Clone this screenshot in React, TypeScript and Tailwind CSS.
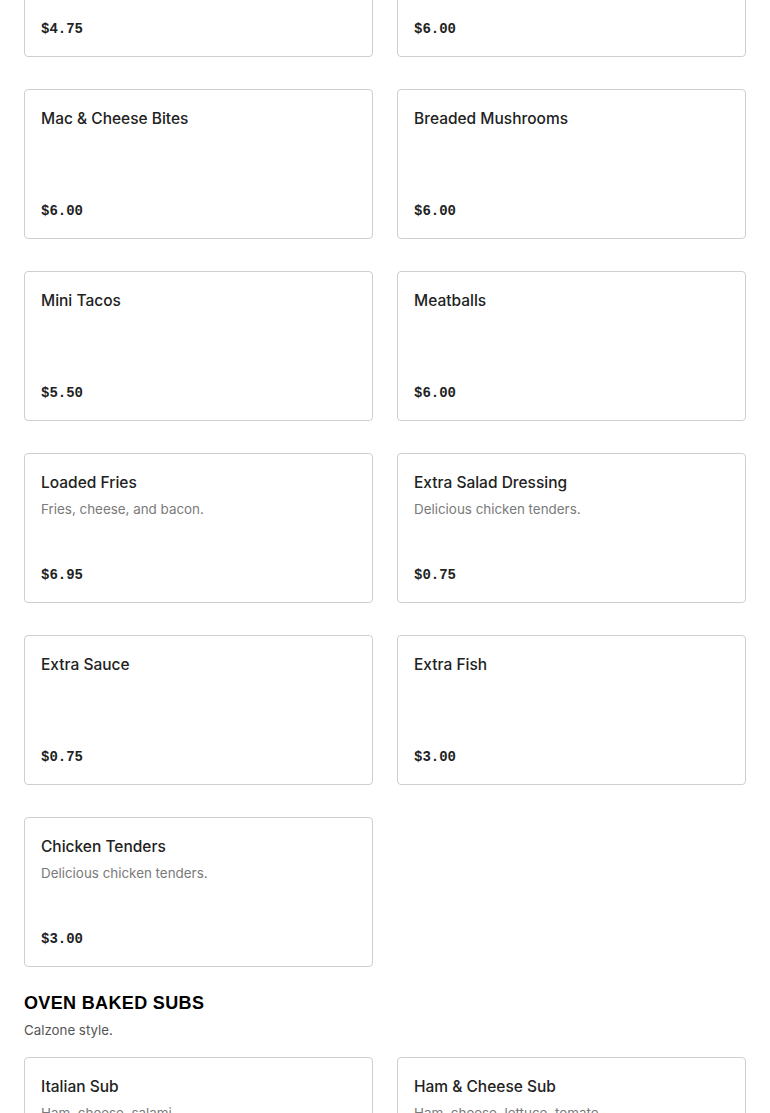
import React from 'react';

type Item = { name: string; description?: string; price: string };

const sides: Item[] = [
  { name: 'Onion Rings', price: '$4.75' },
  { name: 'Mozzarella Sticks', price: '$6.00' },
  { name: 'Mac & Cheese Bites', price: '$6.00' },
  { name: 'Breaded Mushrooms', price: '$6.00' },
  { name: 'Mini Tacos', price: '$5.50' },
  { name: 'Meatballs', price: '$6.00' },
  { name: 'Loaded Fries', description: 'Fries, cheese, and bacon.', price: '$6.95' },
  { name: 'Extra Salad Dressing', description: 'Delicious chicken tenders.', price: '$0.75' },
  { name: 'Extra Sauce', price: '$0.75' },
  { name: 'Extra Fish', price: '$3.00' },
  { name: 'Chicken Tenders', description: 'Delicious chicken tenders.', price: '$3.00' },
];

const subs: Item[] = [
  { name: 'Italian Sub', description: 'Ham, cheese, salami.', price: '$9.50' },
  { name: 'Ham & Cheese Sub', description: 'Ham, cheese, lettuce, tomato.', price: '$8.50' },
];

const sans = "font-['Inter','Liberation_Sans',sans-serif]";

// Tarjeta de un producto del menú
const MenuCard: React.FC<{ item: Item }> = ({ item }) => (
  <div className="flex h-[150px] flex-col justify-between rounded border border-[#cfcfcf] bg-white px-4 pt-[17px] pb-[17px]">
    <div>
      <div className={`${sans} text-[15.5px] leading-6 font-medium text-[#222]`}>{item.name}</div>
      {item.description && (
        <div className={`${sans} mt-[4px] text-[13.4px] leading-5 text-[#7a7a7a]`}>{item.description}</div>
      )}
    </div>
    <div className="font-['Liberation_Mono',monospace] text-[14px] leading-5 font-bold text-[#222]">
      {item.price}
    </div>
  </div>
);

const App: React.FC = () => {
  return (
    <div className="min-h-screen overflow-hidden bg-white">
      <div className="-mt-[93px] px-6">
        {/* Sección de acompañamientos */}
        <div className="grid grid-cols-2 gap-x-6 gap-y-8">
          {sides.map((item, i) => (
            <MenuCard key={i} item={item} />
          ))}
        </div>

        {/* Sección de subs al horno */}
        <div className="mt-[24px]">
          <h2 className="font-['Liberation_Sans',sans-serif] text-[18px] leading-6 font-black tracking-[0.35px] text-black uppercase">
            Oven Baked Subs
          </h2>
          <p className={`${sans} mt-[5px] text-[13.3px] leading-5 text-[#555]`}>Calzone style.</p>
        </div>
        <div className="mt-[17px] grid grid-cols-2 gap-x-6 gap-y-8">
          {subs.map((item, i) => (
            <MenuCard key={i} item={item} />
          ))}
        </div>
      </div>
    </div>
  );
};

export default App;
